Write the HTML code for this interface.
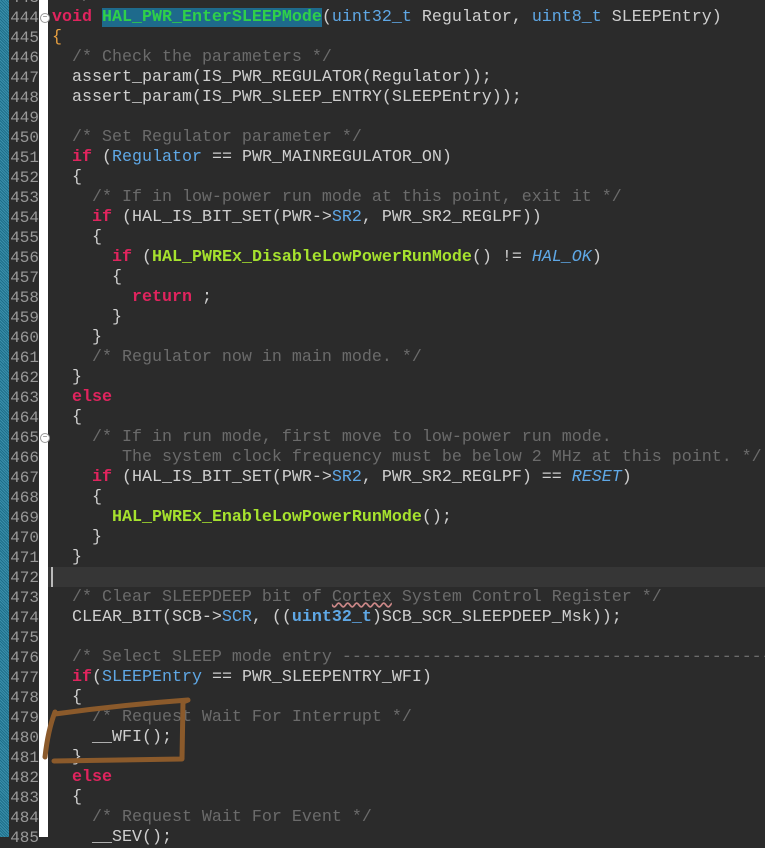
<!DOCTYPE html>
<html><head><meta charset="utf-8"><style>
html,body{margin:0;padding:0;}
body{width:765px;height:837px;overflow:hidden;background:#2b2b2b;position:relative;font-family:"Liberation Mono",monospace;}
#strip{position:absolute;left:0;top:0;width:9px;height:837px;background:repeating-linear-gradient(45deg,#1e6f8a 0 1px,#3a8fab 1px 2px);}
#nums{position:absolute;left:9px;top:-12px;width:30px;background:#2b2b2b;}
#nums div{height:20px;line-height:20px;font-size:16px;color:#9a9a9a;text-align:right;}
#white{position:absolute;left:39px;top:0;width:9px;height:837px;background:#fff;}
#code{position:absolute;left:52px;top:-12px;margin:0;font-size:16.67px;line-height:20px;color:#cfcfcf;white-space:pre;}
#cur{position:absolute;left:48px;top:567px;width:717px;height:20px;background:#363636;}
#caret{position:absolute;left:51px;top:567px;width:2px;height:20px;background:#bbb;}
.k{color:#e0245e;font-weight:bold;}
.f{color:#a6e22e;font-weight:bold;}
.c{color:#6b6b6b;}
.m{color:#5fa8e6;}
.i{color:#5fa8e6;font-style:italic;}
.t{color:#5fa8e6;font-weight:bold;}
.hl{background:#1e6a8c;color:#2fd04a;font-weight:bold;}
.o{color:#e8a040;}
.fold{position:absolute;left:40px;width:8px;height:8px;border:1px solid #999;border-radius:50%;background:#fff;font-size:8px;line-height:8px;text-align:center;color:#666;}
</style></head><body>
<div id="strip"></div>
<div id="nums"><div>443</div><div>444</div><div>445</div><div>446</div><div>447</div><div>448</div><div>449</div><div>450</div><div>451</div><div>452</div><div>453</div><div>454</div><div>455</div><div>456</div><div>457</div><div>458</div><div>459</div><div>460</div><div>461</div><div>462</div><div>463</div><div>464</div><div>465</div><div>466</div><div>467</div><div>468</div><div>469</div><div>470</div><div>471</div><div>472</div><div>473</div><div>474</div><div>475</div><div>476</div><div>477</div><div>478</div><div>479</div><div>480</div><div>481</div><div>482</div><div>483</div><div>484</div><div>485</div></div>
<div id="white"></div>
<div class="fold" style="top:13px">−</div>
<div class="fold" style="top:433px">−</div>
<div id="cur"></div>
<div id="caret"></div>
<pre id="code"><span class="c">  */</span>
<span class="k">void</span> <span class="hl">HAL_PWR_EnterSLEEPMode</span>(<span class="m">uint32_t</span> Regulator, <span class="m">uint8_t</span> SLEEPEntry)
<span class="o">{</span>
  <span class="c">/* Check the parameters */</span>
  assert_param(IS_PWR_REGULATOR(Regulator));
  assert_param(IS_PWR_SLEEP_ENTRY(SLEEPEntry));

  <span class="c">/* Set Regulator parameter */</span>
  <span class="k">if</span> (<span class="m">Regulator</span> == PWR_MAINREGULATOR_ON)
  {
    <span class="c">/* If in low-power run mode at this point, exit it */</span>
    <span class="k">if</span> (HAL_IS_BIT_SET(PWR-&gt;<span class="m">SR2</span>, PWR_SR2_REGLPF))
    {
      <span class="k">if</span> (<span class="f">HAL_PWREx_DisableLowPowerRunMode</span>() != <span class="i">HAL_OK</span>)
      {
        <span class="k">return</span> ;
      }
    }
    <span class="c">/* Regulator now in main mode. */</span>
  }
  <span class="k">else</span>
  {
    <span class="c">/* If in run mode, first move to low-power run mode.
       The system clock frequency must be below 2 MHz at this point. */</span>
    <span class="k">if</span> (HAL_IS_BIT_SET(PWR-&gt;<span class="m">SR2</span>, PWR_SR2_REGLPF) == <span class="i">RESET</span>)
    {
      <span class="f">HAL_PWREx_EnableLowPowerRunMode</span>();
    }
  }

  <span class="c">/* Clear SLEEPDEEP bit of <span style="text-decoration:underline wavy #c88;">Cortex</span> System Control Register */</span>
  CLEAR_BIT(SCB-&gt;<span class="m">SCR</span>, ((<span class="t">uint32_t</span>)SCB_SCR_SLEEPDEEP_Msk));

  <span class="c">/* Select SLEEP mode entry --------------------------------------------</span>
  <span class="k">if</span>(<span class="m">SLEEPEntry</span> == PWR_SLEEPENTRY_WFI)
  {
    <span class="c">/* Request Wait For Interrupt */</span>
    __WFI();
  }
  <span class="k">else</span>
  {
    <span class="c">/* Request Wait For Event */</span>
    __SEV();</pre>
<svg style="position:absolute;left:0;top:0" width="765" height="837">
<path d="M55 714 Q120 705 188 700 L183 702 L182 759 L54 761 M55 712 Q48 730 45 757" fill="none" stroke="#8b5a2b" stroke-width="5" stroke-linecap="round" stroke-linejoin="round"/>
</svg>
</body></html>
